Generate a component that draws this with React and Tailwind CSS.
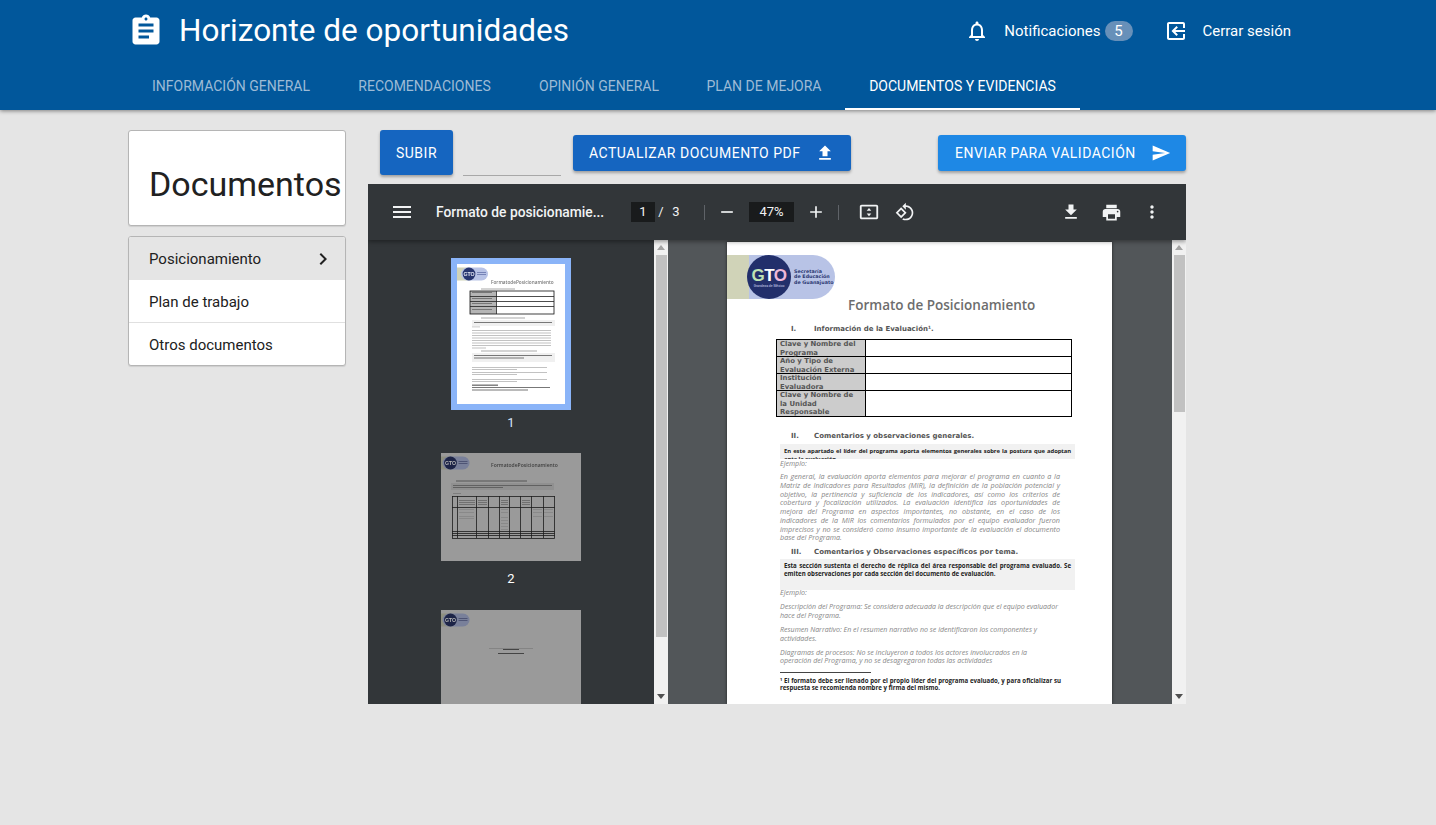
const tabs = [
  { label: "INFORMACIÓN GENERAL", width: "w-[206px]" },
  { label: "RECOMENDACIONES", width: "w-[181px]" },
  { label: "OPINIÓN GENERAL", width: "w-[168px]" },
  { label: "PLAN DE MEJORA", width: "w-[162px]" },
  { label: "DOCUMENTOS Y EVIDENCIAS", width: "w-[235px]", active: true },
];

function Icon({ d, size = 24, className = "" }) {
  return (
    <svg width={size} height={size} viewBox="0 0 24 24" fill="currentColor" className={`shrink-0 ${className}`}>
      <path d={d} />
    </svg>
  );
}

const icons = {
  assignment: "M19 3h-4.18C14.4 1.84 13.3 1 12 1c-1.3 0-2.4.84-2.82 2H5c-1.1 0-2 .9-2 2v14c0 1.1.9 2 2 2h14c1.1 0 2-.9 2-2V5c0-1.1-.9-2-2-2zm-7 0c.55 0 1 .45 1 1s-.45 1-1 1-1-.45-1-1 .45-1 1-1zm2 14H7v-2h7v2zm3-4H7v-2h10v2zm0-4H7V7h10v2z",
  bell: "M12 22c1.1 0 2-.9 2-2h-4c0 1.1.9 2 2 2zm6-6v-5c0-3.07-1.64-5.64-4.5-6.32V4c0-.83-.67-1.5-1.5-1.5s-1.5.67-1.5 1.5v.68C7.63 5.36 6 7.92 6 11v5l-2 2v1h16v-1l-2-2zm-2 1H8v-6c0-2.48 1.51-4.5 4-4.5s4 2.02 4 4.5v6z",
  exit: "M10.09 15.59L11.5 17l5-5-5-5-1.41 1.41L12.67 11H3v2h9.67l-2.58 2.59zM19 3H5c-1.11 0-2 .9-2 2v4h2V5h14v14H5v-4H3v4c0 1.1.89 2 2 2h14c1.1 0 2-.9 2-2V5c0-1.1-.9-2-2-2z",
  chevron: "M10 6L8.59 7.41 13.17 12l-4.58 4.59L10 18l6-6z",
  upload: "M9 16h6v-6h4l-7-7-7 7h4zm-4 2h14v2H5z",
  send: "M2.01 21L23 12 2.01 3 2 10l15 2-15 2z",
  menu: "M3 18h18v-2H3v2zm0-5h18v-2H3v2zm0-7v2h18V6H3z",
  download: "M19 9h-4V3H9v6H5l7 7 7-7zM5 18v2h14v-2H5z",
  print: "M19 8H5c-1.66 0-3 1.34-3 3v6h4v4h12v-4h4v-6c0-1.66-1.34-3-3-3zm-3 11H8v-5h8v5zm3-7c-.55 0-1-.45-1-1s.45-1 1-1 1 .45 1 1-.45 1-1 1zm-1-9H6v4h12V3z",
  more: "M12 8c1.1 0 2-.9 2-2s-.9-2-2-2-2 .9-2 2 .9 2 2 2zm0 2c-1.1 0-2 .9-2 2s.9 2 2 2 2-.9 2-2-.9-2-2-2zm0 6c-1.1 0-2 .9-2 2s.9 2 2 2 2-.9 2-2-.9-2-2-2z",
  minus: "M19 13H5v-2h14v2z",
  plus: "M19 13h-6v6h-2v-6H5v-2h6V5h2v6h6v2z",
  rotate: "M7.34 6.41L.86 12.9l6.49 6.48 6.49-6.48-6.5-6.49zM3.69 12.9l3.66-3.66L11 12.9l-3.66 3.66-3.65-3.66zm15.67-6.26C17.61 4.88 15.3 4 13 4V.76L8.76 5 13 9.24V6c1.79 0 3.58.68 4.95 2.05 2.73 2.73 2.73 7.17 0 9.9C16.58 19.32 14.79 20 13 20c-.97 0-1.94-.21-2.84-.61l-1.49 1.49C10.02 21.62 11.51 22 13 22c2.3 0 4.61-.88 6.36-2.64 3.52-3.51 3.52-9.21 0-12.72z",
  fit: "M20 4H4c-1.1 0-2 .9-2 2v12c0 1.1.9 2 2 2h16c1.1 0 2-.9 2-2V6c0-1.1-.9-2-2-2zm0 14H4V6h16v12zM12 7.5L9.5 10.5h5L12 7.5zM9.5 13.5L12 16.5l2.5-3h-5z",
};

function Header() {
  return (
    <header className="relative z-10 h-[110px] bg-[#01579b] text-white shadow-[0_1px_4px_rgba(0,0,0,0.45)]">
      <div className="flex h-[62px] items-center pl-[128px]">
        <Icon d={icons.assignment} size={36} className="-mt-[1px]" />
        <h1 className="ml-[15px] text-[31.5px] leading-none">Horizonte de oportunidades</h1>
        <div className="ml-auto flex items-center text-[15px]">
          <Icon d={icons.bell} className="mr-[15px]" />
          <span>Notificaciones</span>
          <span className="ml-[4px] flex h-[20px] w-[28px] items-center justify-center rounded-full bg-[#6790b9] text-[15px] leading-none">5</span>
          <Icon d={icons.exit} className="ml-[31px] mr-[15px] -scale-x-100" />
          <span className="mr-[145px]">Cerrar sesión</span>
        </div>
      </div>
      <nav className="flex h-[48px] pl-[128px]">
        {tabs.map((t) => (
          <div
            key={t.label}
            className={`flex items-center justify-center border-b-2 pt-[2px] text-[14px] font-normal ${t.width} ${
              t.active ? "border-white text-white" : "border-transparent text-[#9dbbd6]"
            }`}
          >
            {t.label}
          </div>
        ))}
      </nav>
    </header>
  );
}

function Sidebar() {
  return (
    <aside className="w-[218px] shrink-0">
      <div className="flex h-[96px] items-center overflow-hidden rounded-[3px] border border-[#b5b5b5] bg-white pl-[20px] pt-[11px] shadow-[0_1px_1px_rgba(0,0,0,0.1)]">
        <h2 className="whitespace-nowrap text-[34px] leading-none text-[#212121]">Documentos</h2>
      </div>
      <div className="mt-[10px] overflow-hidden rounded-[3px] border border-[#b5b5b5] bg-white text-[15px] text-[#212121] shadow-[0_1px_1px_rgba(0,0,0,0.1)]">
        <div className="flex h-[43px] items-center justify-between bg-[#e5e5e5] pl-[20px] pr-[10px]">
          <span className="pt-[1px]">Posicionamiento</span>
          <Icon d={icons.chevron} />
        </div>
        <div className="flex h-[43px] items-center border-b border-[#e0e0e0] pl-[20px] pt-[2px]">Plan de trabajo</div>
        <div className="flex h-[42px] items-center pl-[20px] pt-[2px]">Otros documentos</div>
      </div>
    </aside>
  );
}

function Actions() {
  return (
    <div className="flex h-[45px] items-center pl-[12px]">
      <button className="h-[45px] w-[73px] rounded-[3px] bg-[#1565c0] pt-[1px] text-[14px] font-normal tracking-[0.5px] text-white shadow-[0_2px_3px_rgba(0,0,0,0.3)]">SUBIR</button>
      <div className="ml-[10px] h-[46px] w-[98px] self-start border-b border-[#a8a8a8]" />
      <button className="ml-[12px] flex h-[36px] w-[278px] items-center justify-between rounded-[3px] bg-[#1565c0] pl-[16px] pr-[16px] text-[14px] font-normal tracking-[0.5px] text-white shadow-[0_2px_3px_rgba(0,0,0,0.3)]">
        <span className="pt-[1px]">ACTUALIZAR DOCUMENTO PDF</span>
        <Icon d={icons.upload} size={20} />
      </button>
      <button className="ml-auto flex h-[36px] w-[248px] items-center justify-between rounded-[3px] bg-[#1e88e5] pl-[17px] pr-[15px] text-[14px] font-normal tracking-[0.5px] text-white shadow-[0_2px_3px_rgba(0,0,0,0.3)]">
        <span className="pt-[1px]">ENVIAR PARA VALIDACIÓN</span>
        <Icon d={icons.send} size={20} />
      </button>
    </div>
  );
}

function Toolbar() {
  return (
    <div className="relative z-10 flex h-[56px] items-center bg-[#323639] text-[#f1f3f4] shadow-[0_2px_4px_rgba(0,0,0,0.35)]">
      <Icon d={icons.menu} className="ml-[22px]" />
      <span className="ml-[22px] w-[195px] text-[13.8px] font-medium">Formato de posicionamie...</span>
      <span className="flex h-[20px] w-[24px] items-center justify-center bg-[#191b1c] text-[13px]">1</span>
      <span className="w-[12px] text-center text-[13px]">/</span>
      <span className="ml-[3px] w-[12px] text-center text-[13px]">3</span>
      <span className="ml-[22px] h-[15px] w-px bg-[#5f6368]" />
      <Icon d={icons.minus} size={20} className="ml-[12px]" />
      <span className="ml-[12px] flex h-[20px] w-[45px] items-center justify-center bg-[#191b1c] text-[13px]">47%</span>
      <Icon d={icons.plus} size={20} className="ml-[12px]" />
      <span className="ml-[12px] h-[15px] w-px bg-[#5f6368]" />
      <Icon d={icons.fit} size={22} className="ml-[19px]" />
      <Icon d={icons.rotate} size={20} className="ml-[15px]" />
      <Icon d={icons.download} size={20} className="ml-auto" />
      <Icon d={icons.print} size={21} className="ml-[20px]" />
      <Icon d={icons.more} size={20} className="ml-[20px] mr-[24px]" />
    </div>
  );
}

function Scrollbar({ thumb }) {
  return (
    <div className="flex w-[14px] shrink-0 flex-col items-center bg-[#f1f1f1]">
      <svg width="8" height="5" viewBox="0 0 8 5" className="mt-[5px] shrink-0"><path d="M4 0l4 5H0z" fill="#a3a3a3" /></svg>
      <div className={`mt-[5px] w-[11px] shrink-0 bg-[#c1c1c1] ${thumb}`} />
      <svg width="8" height="5" viewBox="0 0 8 5" className="mb-[5px] mt-auto shrink-0"><path d="M4 5l4-5H0z" fill="#505050" /></svg>
    </div>
  );
}

// miniaturas: dibujo borroso de cada pagina
function MiniLogo({ cx, cy, dim }) {
  return (
    <g>
      <rect x="0" y={cy - 6.5} width={cx} height="13" fill={dim ? "#8f9080" : "#d0d3b8"} />
      <rect x={cx - 8} y={cy - 6.5} width="27" height="13" rx="6.5" fill={dim ? "#79809a" : "#b8c3e6"} />
      <circle cx={cx} cy={cy} r="6.4" fill={dim ? "#1d2447" : "#27356f"} />
      <text x={cx} y={cy + 1.8} textAnchor="middle" fontSize="5.2" fontWeight="700" fill={dim ? "#b5b5b5" : "#e6e9f5"} fontFamily="'Liberation Sans', sans-serif">GTO</text>
      <rect x={cx + 8} y={cy - 2} width="9" height="0.9" fill={dim ? "#4a5070" : "#6f7cb0"} />
      <rect x={cx + 8} y={cy} width="9" height="0.9" fill={dim ? "#4a5070" : "#6f7cb0"} />
    </g>
  );
}

function Lines({ rows, x1, x2, color = "#c2c2c2", h = 1 }) {
  return rows.map((y, i) => <rect key={i} x={x1} y={y} width={x2 - x1} height={h} fill={color} />);
}

function ThumbOne() {
  return (
    <svg width="108" height="140" viewBox="0 0 108 140" className="block bg-white">
      <g className="blur-[0.35px]">
        <MiniLogo cx={12} cy={10} />
        <text x="34" y="20" fontSize="4.7" fill="#777" fontFamily="'Open Sans', sans-serif" fontWeight="600">FormatodePosicionamiento</text>
        <rect x="24" y="24.5" width="34" height="1" fill="#aaa" />
        <rect x="13" y="27" width="26" height="23" fill="#b5b5b5" />
        <rect x="15" y="28" width="20" height="1" fill="#777" />
        <rect x="15" y="34" width="20" height="1" fill="#777" />
        <rect x="15" y="39" width="20" height="1" fill="#777" />
        <rect x="15" y="45" width="20" height="1" fill="#777" />
        <rect x="24" y="53.5" width="44" height="1" fill="#aaa" />
        <rect x="15" y="56" width="83" height="6" fill="#f0f0f0" />
        <rect x="17" y="58" width="78" height="1" fill="#777" />
        <rect x="15" y="62.5" width="8" height="0.8" fill="#bbb" />
        <Lines rows={[66, 68.5, 71, 73.5, 76, 78.5, 81]} x1={15} x2={94} />
        <rect x="15" y="83.5" width="14" height="1" fill="#c2c2c2" />
        <rect x="24" y="86.5" width="56" height="1" fill="#aaa" />
        <rect x="15" y="89" width="83" height="9" fill="#f0f0f0" />
        <rect x="17" y="91" width="78" height="1" fill="#777" />
        <rect x="17" y="93.5" width="50" height="1" fill="#777" />
        <Lines rows={[103, 108, 115]} x1={15} x2={90} />
        <Lines rows={[105, 110, 117]} x1={15} x2={60} />
        <rect x="15" y="120.5" width="26" height="1.4" fill="#777" />
        <rect x="15" y="123" width="78" height="1" fill="#777" />
        <rect x="15" y="125.5" width="56" height="1" fill="#777" />
      </g>
      <rect x="13" y="27" width="84" height="23" fill="none" stroke="#111" strokeWidth="0.8" />
      <Lines rows={[32, 37, 42]} x1={13} x2={97} color="#222" h={0.8} />
      <rect x="39" y="27" width="0.8" height="23" fill="#222" />
    </svg>
  );
}

function ThumbTwo() {
  const cols = [11, 16, 35, 47, 58, 68, 79, 90, 102, 113];
  const rows = [43, 54, 78, 80, 82, 85];
  return (
    <svg width="140" height="108" viewBox="0 0 140 108" className="block bg-[#9a9a9a]">
      <g className="blur-[0.35px]">
        <MiniLogo cx={9.5} cy={10} dim />
        <text x="50" y="14" fontSize="5" fill="#3f3f3f" fontFamily="'Open Sans', sans-serif" fontWeight="600">FormatodePosicionamiento</text>
        <rect x="15" y="27.5" width="71" height="1" fill="#555" />
        <rect x="10" y="30" width="103" height="7" fill="#909090" />
        <rect x="12" y="32" width="99" height="0.8" fill="#555" />
        <rect x="12" y="34" width="50" height="0.8" fill="#555" />
        <rect x="12" y="40" width="8" height="0.8" fill="#777" />
        <Lines rows={[47, 49, 51]} x1={18} x2={34} color="#666" h={0.8} />
        <Lines rows={[47, 49, 51]} x1={37} x2={46} color="#666" h={0.8} />
        <Lines rows={[47, 49, 51]} x1={60} x2={67} color="#666" h={0.8} />
        <Lines rows={[47, 49, 51]} x1={81} x2={89} color="#666" h={0.8} />
        <Lines rows={[56, 59, 63, 65]} x1={18} x2={33} color="#858585" h={0.8} />
        <Lines rows={[56, 59, 64, 67, 70, 73, 76]} x1={60} x2={67} color="#858585" h={0.8} />
        <Lines rows={[56, 59, 63]} x1={92} x2={101} color="#858585" h={0.8} />
        <Lines rows={[56, 59, 63]} x1={103} x2={112} color="#858585" h={0.8} />
      </g>
      {cols.map((x) => <rect key={x} x={x} y="43" width="0.8" height="42" fill="#1c1c1c" />)}
      {rows.map((y) => <rect key={y} x="11" y={y} width="102.8" height="0.8" fill="#1c1c1c" />)}
    </svg>
  );
}

function ThumbThree() {
  return (
    <svg width="140" height="108" viewBox="0 0 140 108" className="block bg-[#9a9a9a]">
      <g className="blur-[0.3px]">
        <MiniLogo cx={9.5} cy={10} dim />
        <rect x="48" y="38" width="44" height="0.6" fill="#777" />
        <rect x="62" y="39" width="16" height="1" fill="#444" />
        <rect x="57" y="43" width="26" height="1" fill="#444" />
      </g>
    </svg>
  );
}

function Thumbnails() {
  return (
    <div className="flex flex-1 flex-col items-center overflow-hidden bg-[#323639] pt-[18px] text-[13px] text-white">
      <div className="border-[6px] border-[#8ab4f8]"><ThumbOne /></div>
      <span className="mt-[5px] h-[16px] leading-[16px] text-[#d2e3fc]">1</span>
      <div className="mt-[22px]"><ThumbTwo /></div>
      <span className="mt-[10px] h-[16px] leading-[16px]">2</span>
      <div className="mt-[23px] shrink-0"><ThumbThree /></div>
    </div>
  );
}

const boldDoc = "font-['DejaVu_Sans',sans-serif] font-bold";
const boldSmall = "font-['Open_Sans',sans-serif] font-bold text-[6.1px] text-[#222]";

function SectionTitle({ num, children, className = "" }) {
  return (
    <div className={`flex text-[7px] leading-[10px] text-[#555] ${boldDoc} ${className}`}>
      <span className="ml-[64px] w-[23px]">{num}</span>
      <span>{children}</span>
    </div>
  );
}

function InfoRow({ h, children, last }) {
  return (
    <div className={`flex border-black ${last ? "" : "border-b"}`} style={{ height: h }}>
      <div className="w-[89px] shrink-0 whitespace-pre-line border-r border-black bg-[#cccccc] pl-[3px] text-[6.9px] leading-[8.5px] text-[#555]">
        {children}
      </div>
    </div>
  );
}

function PdfPage() {
  const note = "font-['Open_Sans',sans-serif] italic text-[7.05px] text-[#868686]";
  return (
    <div className="ml-[59px] h-[462px] w-[385px] shrink-0 overflow-hidden bg-white shadow-[0_0_3px_rgba(0,0,0,0.6)]">
      <div className="mt-[13px] flex h-[44px] items-center">
        <div className="flex h-[44px] w-[108px] items-center rounded-r-full bg-gradient-to-r from-[#d0d3b8] from-20% to-[#b8c3e6] to-20%">
          <div className="ml-[20px] flex h-[44px] w-[44px] shrink-0 flex-col items-center justify-center rounded-full bg-[#222f6b] text-white">
            <span className="font-['Liberation_Sans',sans-serif] text-[17px] font-bold leading-[17px] tracking-[-0.5px]">
              <span className="text-[#bfe3b4]">G</span>T<span className="text-[#f0b7d8]">O</span>
            </span>
            <span className="text-[3.4px] leading-[4px] text-[#cdd3ee]">Grandeza de México</span>
          </div>
          <div className={`ml-[3px] text-[4.8px] leading-[5.2px] text-[#2d3a74] ${boldDoc}`}>
            Secretaría<br />de Educación<br />de Guanajuato
          </div>
        </div>
      </div>
      <div className="mt-[-2px] pl-[121px] font-['Open_Sans',sans-serif] text-[13.5px] font-semibold leading-[16px] text-[#6d6d6d]">Formato de Posicionamiento</div>
      <SectionTitle num="I." className="mt-[11px]">Información de la Evaluación¹.</SectionTitle>
      <div className={`ml-[49px] mt-[5px] w-[296px] border border-black ${boldDoc}`}>
        <InfoRow h={17}>{"Clave y Nombre del\nPrograma"}</InfoRow>
        <InfoRow h={17}>{"Año y Tipo de\nEvaluación Externa"}</InfoRow>
        <InfoRow h={17}>{"Institución\nEvaluadora"}</InfoRow>
        <InfoRow h={25} last>{"Clave y Nombre de\nla Unidad\nResponsable"}</InfoRow>
      </div>
      <SectionTitle num="II." className="mt-[14px]">Comentarios y observaciones generales.</SectionTitle>
      <div className={`ml-[53px] mt-[3px] h-[15px] w-[295px] overflow-hidden bg-[#f1f1f1] px-[4px] pt-[3px] text-justify text-[5.9px]! tracking-[-0.1px] leading-[8px] ${boldSmall}`}>
        En este apartado el líder del programa aporta elementos generales sobre la postura que adoptan ante la evaluación.
      </div>
      <p className={`ml-[53px] leading-[9px] ${note}`}>Ejemplo:</p>
      <p className={`ml-[53px] mt-[4px] w-[280px] text-justify text-[7.2px]! leading-[8.75px] ${note}`}>
        En general, la evaluación aporta elementos para mejorar el programa en cuanto a la Matriz de Indicadores para Resultados (MIR), la definición de la población potencial y objetivo, la pertinencia y suficiencia de los indicadores, así como los criterios de cobertura y focalización utilizados. La evaluación identifica las oportunidades de mejora del Programa en aspectos importantes, no obstante, en el caso de los indicadores de la MIR los comentarios formulados por el equipo evaluador fueron imprecisos y no se consideró como insumo importante de la evaluación el documento base del Programa.
      </p>
      <SectionTitle num="III." className="mt-[5px]">Comentarios y Observaciones específicos por tema.</SectionTitle>
      <div className={`ml-[53px] mt-[2px] h-[31px] w-[295px] bg-[#f1f1f1] px-[4px] pt-[3px] text-justify leading-[7.5px] ${boldSmall}`}>
        Esta sección sustenta el derecho de réplica del área responsable del programa evaluado. Se emiten observaciones por cada sección del documento de evaluación.
      </div>
      <p className={`ml-[53px] mt-[-2px] leading-[9px] ${note}`}>Ejemplo:</p>
      <p className={`ml-[53px] mt-[5px] w-[290px] leading-[9px] ${note}`}>Descripción del Programa: Se considera adecuada la descripción que el equipo evaluador hace del Programa.</p>
      <p className={`ml-[53px] mt-[4.5px] w-[290px] leading-[9px] ${note}`}>Resumen Narrativo: En el resumen narrativo no se identificaron los componentes y actividades.</p>
      <p className={`ml-[53px] mt-[5px] w-[280px] leading-[8.5px] ${note}`}>Diagramas de procesos: No se incluyeron a todos los actores involucrados en la operación del Programa, y no se desagregaron todas las actividades</p>
      <div className="ml-[53px] mt-[7px] h-[1px] w-[91px] bg-[#444]" />
      <p className={`ml-[53px] mt-[4px] w-[281px] text-justify leading-[7px] ${boldSmall}`}>
        <sup className="text-[4px] leading-none">1</sup> El formato debe ser llenado por el propio líder del programa evaluado, y para oficializar su respuesta se recomienda nombre y firma del mismo.
      </p>
    </div>
  );
}

function Viewer() {
  return (
    <div className="mt-[9px] flex h-[520px] flex-col overflow-hidden">
      <Toolbar />
      <div className="flex h-[464px] overflow-hidden">
        <Thumbnails />
        <Scrollbar thumb="h-[382px]" />
        <div className="flex w-[504px] shrink-0 overflow-hidden bg-[#525659] pt-[2px]">
          <PdfPage />
        </div>
        <Scrollbar thumb="h-[157px]" />
      </div>
    </div>
  );
}

export default function App() {
  return (
    <div className="min-h-[825px] bg-[#e5e5e5] font-['Roboto',sans-serif]">
      <Header />
      <main className="flex gap-[22px] pl-[128px] pt-[20px]">
        <Sidebar />
        <div className="w-[818px]">
          <Actions />
          <Viewer />
        </div>
      </main>
    </div>
  );
}
